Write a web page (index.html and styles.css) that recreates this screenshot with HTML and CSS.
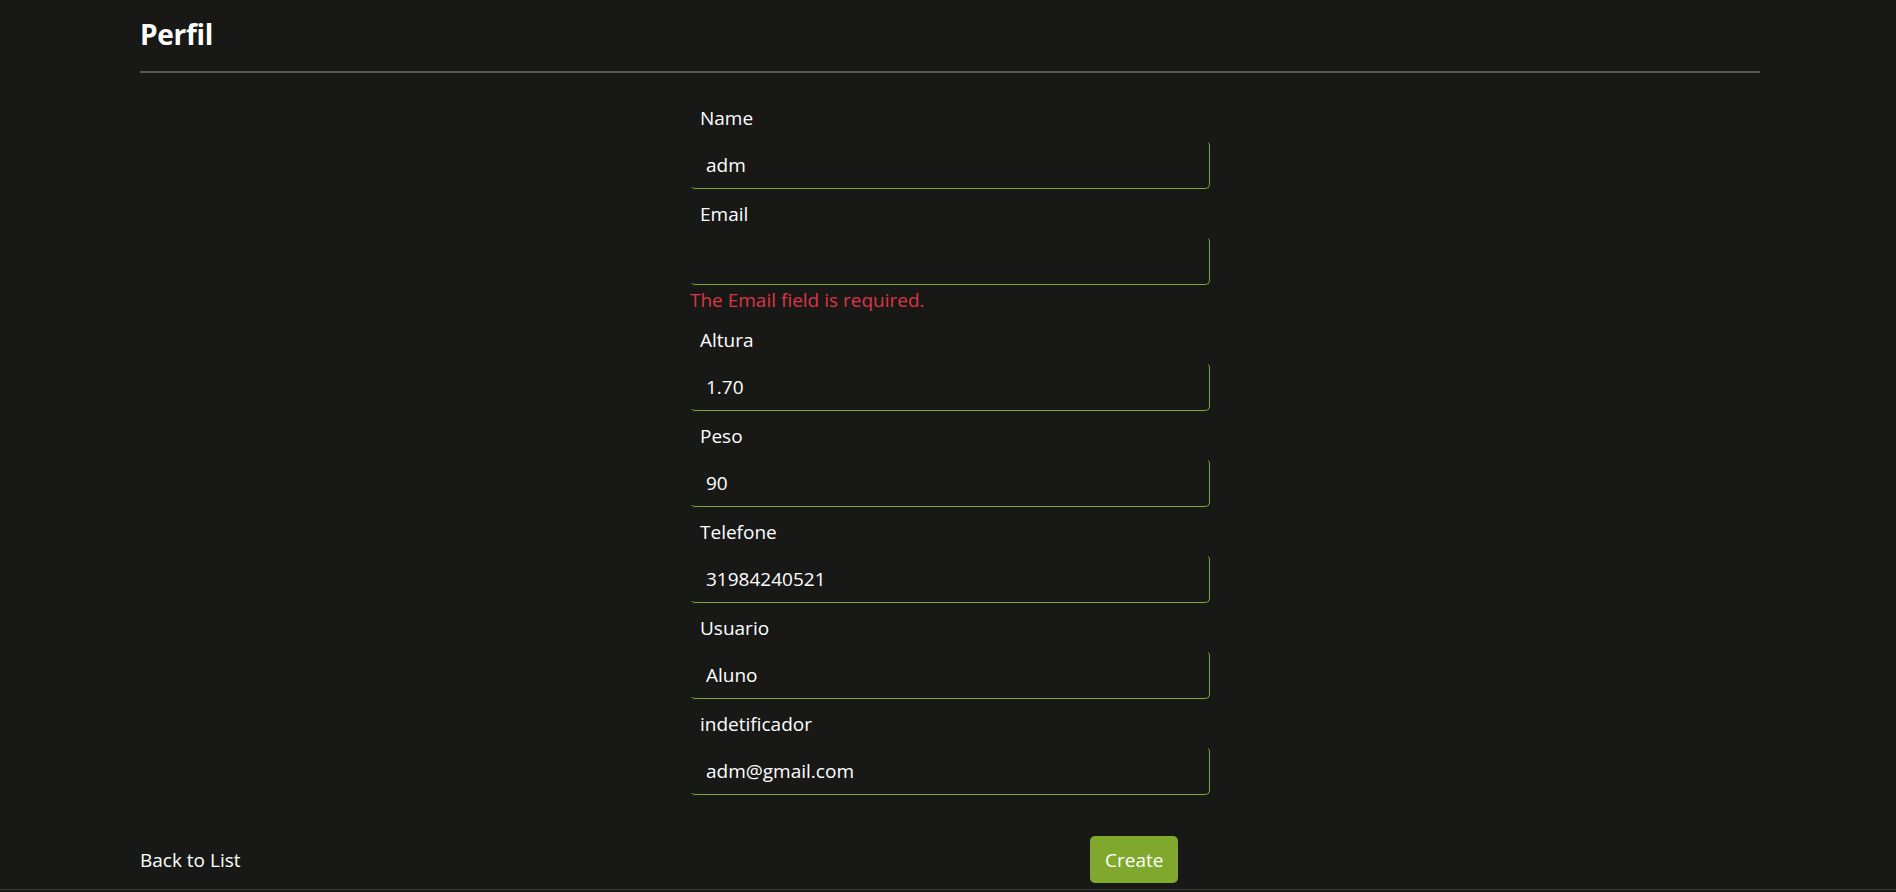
FILE: index.html
```html
<!DOCTYPE html>
<html lang="pt">
<head>
<meta charset="utf-8">
<title>Perfil</title>
<link rel="stylesheet" href="styles.css">
</head>
<body>
<div class="page">
  <h4 class="title">Perfil</h4>
  <hr class="rule">
  <form class="form-col">
    <div class="group">
      <label class="label">Name</label>
      <input class="field" type="text" value="adm">
    </div>
    <div class="group">
      <label class="label">Email</label>
      <input class="field" type="text" value="">
      <span class="error">The Email field is required.</span>
    </div>
    <div class="group">
      <label class="label">Altura</label>
      <input class="field" type="text" value="1.70">
    </div>
    <div class="group">
      <label class="label">Peso</label>
      <input class="field" type="text" value="90">
    </div>
    <div class="group">
      <label class="label">Telefone</label>
      <input class="field" type="text" value="31984240521">
    </div>
    <div class="group">
      <label class="label">Usuario</label>
      <input class="field" type="text" value="Aluno">
    </div>
    <div class="group">
      <label class="label">indetificador</label>
      <input class="field" type="text" value="adm@gmail.com">
    </div>
  </form>
  <div class="actions">
    <a class="back" href="#">Back to List</a>
    <button class="btn-create" type="button">Create</button>
  </div>
</div>
<footer class="footer"></footer>
</body>
</html>
```

FILE: styles.css
```css
html, body {
  margin: 0;
  padding: 0;
  background: #181917;
  color: #ffffff;
  font-family: "Open Sans", "Noto Sans", "Liberation Sans", sans-serif;
  font-size: 19px;
  line-height: 30px;
  height: 892px;
  overflow: hidden;
}

.page {
  width: 1620px;
  margin-left: 140px;
  padding-top: 16px;
}

.title {
  margin: 0;
  font-size: 28px;
  font-weight: 700;
  line-height: 36px;
  letter-spacing: -0.3px;
  color: #ffffff;
}

.rule {
  margin: 19px 0 30px 0;
  border: 0;
  height: 2px;
  background: #585955;
}

.form-col {
  margin-left: 550px;
  width: 520px;
  display: flex;
  flex-direction: column;
}

.group {
  display: flex;
  flex-direction: column;
  margin-bottom: 10px;
}

.label {
  display: block;
  padding-left: 10px;
  line-height: 30px;
  margin-bottom: 8px;
  color: #ffffff;
}

.field {
  box-sizing: border-box;
  height: 48px;
  width: 100%;
  padding: 0 15px;
  margin: 0;
  background: transparent;
  color: #ffffff;
  font-family: inherit;
  font-size: 19px;
  border: 1px solid transparent;
  border-right-color: #7fa82c;
  border-bottom-color: #7fa82c;
  border-radius: 5px;
  outline: none;
}

.error {
  display: block;
  color: #dc3545;
  font-size: 19px;
  line-height: 30px;
  margin-top: 0;
}

.actions {
  display: grid;
  grid-template-columns: 950px auto;
  align-items: center;
  justify-content: start;
  margin-top: 31px;
}

.back {
  color: #ffffff;
  text-decoration: none;
  line-height: 30px;
}

.btn-create {
  box-sizing: border-box;
  height: 47px;
  padding: 0 15px;
  background: #7fa82c;
  color: #ffffff;
  border: none;
  border-radius: 5px;
  font-family: inherit;
  font-size: 19px;
  line-height: 30px;
  cursor: pointer;
}

.footer {
  margin-top: 6px;
  border-top: 1px solid #3a3b39;
  height: 10px;
}
```
